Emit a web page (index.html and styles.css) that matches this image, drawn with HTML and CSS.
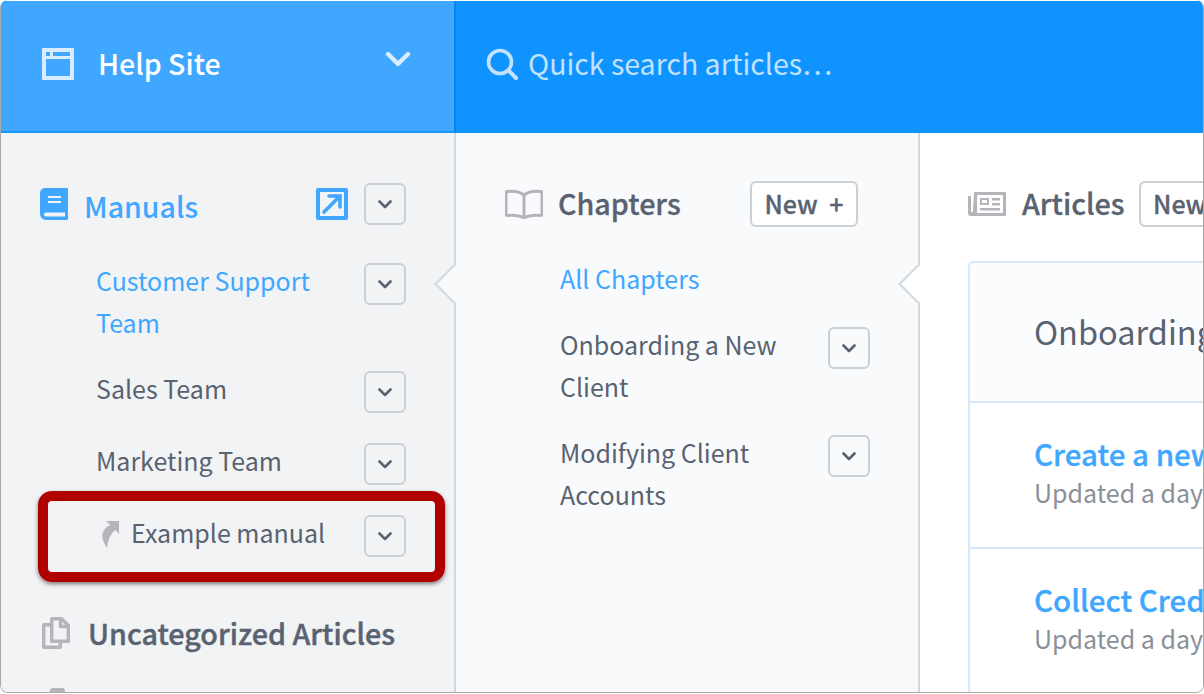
FILE: index.html
```html
<!DOCTYPE html>
<html lang="en">
<head>
    <meta charset="UTF-8">
    <title>Help Site</title>
    <link rel="stylesheet" href="styles.css">
</head>
<body>
    <div class="frame">
        <header class="topbar">
            <div class="site-switch">
                <svg class="site-icon" viewBox="0 0 32 32"><path fill="currentColor" fill-rule="evenodd" d="M1 0h30a1 1 0 0 1 1 1v30a1 1 0 0 1-1 1H1a1 1 0 0 1-1-1V1a1 1 0 0 1 1-1zm3 4v4h4V4zm7 0v4h17V4zM4 11v17h24V11z"/></svg>
                <span class="site-name">Help Site</span>
                <svg class="site-caret" viewBox="0 0 26 18"><path d="M3 3l10 10L23 3" fill="none" stroke="currentColor" stroke-width="4.4" stroke-linecap="round" stroke-linejoin="round"/></svg>
            </div>
            <div class="search">
                <svg class="search-icon" viewBox="0 0 32 32"><circle cx="14" cy="14" r="11.5" fill="none" stroke="currentColor" stroke-width="3.6"/><path d="M23 23l7 7" stroke="currentColor" stroke-width="4" stroke-linecap="round"/></svg>
                <span>Quick search articles…</span>
            </div>
        </header>

        <div class="columns">
            <aside class="col col-manuals">
                <div class="col-head">
                    <svg class="head-icon book" viewBox="0 0 28 32"><path fill="#3fa7ff" fill-rule="evenodd" d="M5 0h22a1 1 0 0 1 1 1v30l-1 1H6a6 6 0 0 1-6-6V5a5 5 0 0 1 5-5zm3 8v2h13V8zm0 5v2h13v-2zM6 24.500a2 2 0 0 0 0 4h19v-4z"/></svg>
                    <span class="manuals-title">Manuals</span>
                    <svg class="open-icon" viewBox="0 0 32 32"><path fill="#3fa7ff" fill-rule="evenodd" d="M2 0h28a2 2 0 0 1 2 2v28a2 2 0 0 1-2 2H2a2 2 0 0 1-2-2V2a2 2 0 0 1 2-2zm2 4v24h24V4z"/><path d="M8 24L23 9M13 8h11v11" fill="none" stroke="#3fa7ff" stroke-width="3.600" stroke-linecap="round"/></svg>
                    <button class="menu-btn"><svg viewBox="0 0 14 9"><path d="M1.500 1.500L7 7l5.500-5.500"/></svg></button>
                </div>
                <ul class="nav">
                    <li class="nav-row active"><a>Customer Support Team</a><button class="menu-btn"><svg viewBox="0 0 14 9"><path d="M1.500 1.500L7 7l5.500-5.500"/></svg></button></li>
                    <li class="nav-row"><a>Sales Team</a><button class="menu-btn"><svg viewBox="0 0 14 9"><path d="M1.500 1.500L7 7l5.500-5.500"/></svg></button></li>
                    <li class="nav-row"><a>Marketing Team</a><button class="menu-btn"><svg viewBox="0 0 14 9"><path d="M1.500 1.500L7 7l5.500-5.500"/></svg></button></li>
                    <li class="nav-row linked">
                        <svg class="link-icon" viewBox="0 0 17 28"><path fill="#b3b5b9" d="M4 0h13v13l-3.500-4C9 12 6 18 5 27 1 21-1 15 1.500 10 3 7 5.500 5 8.500 4z"/></svg>
                        <a>Example manual</a><button class="menu-btn"><svg viewBox="0 0 14 9"><path d="M1.500 1.500L7 7l5.500-5.500"/></svg></button>
                    </li>
                </ul>
                <div class="uncat">
                    <svg class="head-icon copy" viewBox="0 0 28 32"><path d="M10 1.700h9.500l6.800 6.800v15.800H9.700V2zM9.700 7.700H1.700v22.600h16.600v-6M18.500 2v7.500h7.500" fill="none" stroke="#b3b5b9" stroke-width="3.400" stroke-linejoin="round"/></svg>
                    <span>Uncategorized Articles</span>
                </div>
                <div class="peek"></div>
            </aside>

            <section class="col col-chapters">
                <span class="notch"></span>
                <div class="col-head">
                    <svg class="head-icon open-book" viewBox="0 0 38 30"><path d="M19 6C15 3 8 2 2.500 2.500 1.500 2.600 1 3.200 1 4v21c0 1 .6 1.500 1.500 1.500 6-.4 12 0 16.500 2.500 4.500-2.500 10.500-2.900 16.500-2.500 .9 0 1.500-.5 1.500-1.500V4c0-.8-.5-1.400-1.500-1.500C30 2 23 3 19 6zm0 0v23" fill="none" stroke="#b3b5b9" stroke-width="3"/></svg>
                    <h2>Chapters</h2>
                    <button class="new-btn">New <span class="plus">+</span></button>
                </div>
                <ul class="nav">
                    <li class="nav-row active"><a>All Chapters</a></li>
                    <li class="nav-row"><a>Onboarding a New Client</a><button class="menu-btn"><svg viewBox="0 0 14 9"><path d="M1.500 1.500L7 7l5.500-5.500"/></svg></button></li>
                    <li class="nav-row"><a>Modifying Client Accounts</a><button class="menu-btn"><svg viewBox="0 0 14 9"><path d="M1.500 1.500L7 7l5.500-5.500"/></svg></button></li>
                </ul>
            </section>

            <section class="col col-articles">
                <span class="notch"></span>
                <div class="col-head">
                    <svg class="head-icon news" viewBox="0 0 38 24"><path fill="#b3b5b9" fill-rule="evenodd" d="M6 0h31a1 1 0 0 1 1 1v22a1 1 0 0 1-1 1H3a3 3 0 0 1-3-3V4h3v16h2zm3 3v18h26V3zm3 3h9v7h-9zm2 2v3h5V8zm10-2h8v2.500h-8zm0 5h8v2.500h-8zm-12 5h20v2.500H12z"/></svg>
                    <h2>Articles</h2>
                    <button class="new-btn">New <span class="plus">+</span></button>
                </div>
                <div class="article-list">
                    <div class="list-title">Onboarding a New Client</div>
                    <div class="article">
                        <a>Create a new client</a>
                        <p>Updated a day ago</p>
                    </div>
                    <div class="article">
                        <a>Collect Credentials</a>
                        <p>Updated a day ago</p>
                    </div>
                </div>
            </section>
        </div>

        <div class="callout"></div>
    </div>
</body>
</html>
```

FILE: styles.css
```css
* {
    box-sizing: border-box;
}
html, body {
    margin: 0;
    height: 694px;
    overflow: hidden;
    background: #fff;
}
body {
    font-family: "Noto Sans CJK SC", "Noto Sans", sans-serif;
    color: #596270;
}
ul {
    list-style: none;
    margin: 0;
    padding: 0;
}
.frame {
    position: relative;
    width: 1204px;
    height: 693px;
    border: 1px solid #a9a9a9;
    border-top: 0;
    border-radius: 8px;
    overflow: hidden;
    padding-top: 1px;
}

/* top bar */
.topbar {
    display: flex;
    height: 132px;
    background: #0f94ff;
}
.site-switch {
    display: flex;
    align-items: flex-start;
    width: 455px;
    padding: 47px 43px 0 41px;
    background: #3fa7ff;
    border-right: 2px solid #0a84ea;
    border-bottom: 2px solid #1a94ff;
    color: #fff;
}
.site-icon {
    width: 32px;
    height: 32px;
    color: #d9ecff;
}
.site-name {
    margin: -5px 0 0 24px;
    font-size: 28.5px;
    line-height: 40px;
    font-weight: 500;
}
.site-caret {
    width: 26px;
    height: 18px;
    margin: 3px 0 0 auto;
    color: #d9ecff;
}
.search {
    display: flex;
    align-items: flex-start;
    padding: 47px 0 0 30px;
    color: #c3e2ff;
    font-size: 28.5px;
    line-height: 40px;
}
.search-icon {
    width: 32px;
    height: 32px;
    margin-right: 10px;
}
.search span {
    margin-top: -5px;
}

/* columns */
.columns {
    display: flex;
    height: 559px;
}
.col {
    position: relative;
    flex: none;
    padding-top: 50px;
}
.col-manuals {
    width: 455px;
    padding-left: 39px;
    padding-right: 48px;
    background: #f1f3f5;
    border-right: 2px solid #d0d8e0;
}
.col-chapters {
    width: 464px;
    padding-left: 49px;
    padding-right: 48px;
    background: #f8fafc;
    border-right: 2px solid #d0d8e0;
}
.col-articles {
    flex: 1;
    min-width: 0;
    padding-left: 48px;
    background: #fff;
    white-space: nowrap;
}
.notch {
    position: absolute;
    left: -16px;
    top: 137px;
    width: 28px;
    height: 28px;
    transform: rotate(45deg);
    background: inherit;
    border-left: 2px solid #d0d8e0;
    border-bottom: 2px solid #d0d8e0;
}
.col-head {
    position: relative;
    display: flex;
    align-items: center;
    height: 42px;
}
.head-icon {
    flex: none;
}
.book {
    width: 28px;
    height: 32px;
}
.manuals-title {
    margin: 2px 0 0 16px;
    flex: 1;
    font-size: 28.5px;
    font-weight: 500;
    color: #3fa7ff;
}
.open-icon {
    width: 32px;
    height: 32px;
    margin-right: 16px;
}
.col-head h2 {
    margin: -4px 0 0;
    font-size: 28.7px;
    font-weight: 500;
    color: #596270;
    -webkit-text-stroke: 0.3px #596270;
}
.open-book {
    width: 38px;
    height: 30px;
}
.col-chapters h2 {
    margin-left: 15px;
    flex: 1;
}
.col-chapters .new-btn {
    margin-right: 12px;
}
.news {
    width: 38px;
    height: 24px;
}
.col-articles h2 {
    margin-left: 16px;
}
.col-chapters .col-head,
.col-articles .col-head {
    margin-top: -2px;
    height: 46px;
}
.col-articles .new-btn {
    margin-left: 14px;
}

/* buttons */
.menu-btn {
    flex: none;
    display: flex;
    align-items: center;
    justify-content: center;
    width: 42px;
    height: 42px;
    padding: 0;
    background: transparent;
    border: 2px solid #cdd0d3;
    border-radius: 6px;
}
.menu-btn svg {
    width: 14px;
    height: 9px;
}
.menu-btn path {
    fill: none;
    stroke: #596270;
    stroke-width: 2.6;
    stroke-linecap: round;
    stroke-linejoin: round;
}
.new-btn {
    flex: none;
    width: 108px;
    height: 46px;
    padding: 0 0 2px;
    background: #fff;
    border: 2px solid #cdd0d3;
    border-radius: 6px;
    font-family: inherit;
    font-size: 25px;
    font-weight: 500;
    line-height: 38px;
    color: #596270;
    white-space: nowrap;
    -webkit-text-stroke: 0.3px #596270;
}
.plus {
    margin-left: 6px;
}

/* nav lists */
.nav {
    margin-top: 36px;
    padding-left: 56px;
}
.col-chapters .nav {
    margin-top: 32px;
    padding-left: 55px;
}
.nav-row {
    display: flex;
    justify-content: space-between;
    padding-bottom: 24px;
    font-size: 25px;
    line-height: 42px;
}
.nav-row a {
    width: 225px;
    margin: -2px 0 2px;
}
.nav-row .menu-btn {
    margin: 2px 0 4px;
}
.nav-row.active a {
    color: #3fa7ff;
    width: 240px;
}
.linked a {
    width: auto;
    flex: 1;
}
.link-icon {
    flex: none;
    width: 17px;
    height: 28px;
    margin: 8px 12px 0 6px;
}
.uncat {
    display: flex;
    align-items: center;
    margin-top: 27px;
    padding-left: 2px;
    font-size: 28.7px;
    line-height: 42px;
    font-weight: 500;
    white-space: nowrap;
    -webkit-text-stroke: 0.4px #596270;
}
.copy {
    width: 28px;
    height: 32px;
    margin-right: 18px;
}
.peek {
    width: 15px;
    height: 10px;
    margin: 34px 0 0 10px;
    background: #b3b5b9;
    border-radius: 3px;
}

/* articles */
.article-list {
    width: 600px;
    margin-top: 34px;
    border: 2px solid #d4e9fb;
    border-radius: 6px;
}
.list-title {
    height: 138px;
    padding: 44px 0 0 64px;
    background: #fbfcfe;
    border-radius: 6px 6px 0 0;
    font-size: 32.5px;
    line-height: 48px;
}
.article {
    height: 146px;
    padding: 30px 0 0 64px;
    border-top: 2px solid #d4e9fb;
}
.article a {
    display: block;
    font-size: 29.5px;
    line-height: 40px;
    font-weight: 500;
    color: #3fa7ff;
    -webkit-text-stroke: 0.3px #3fa7ff;
}
.article p {
    margin: 0;
    font-size: 25px;
    line-height: 38px;
    color: #8a9099;
}

/* red annotation box */
.callout {
    position: absolute;
    left: 37px;
    top: 491px;
    width: 407px;
    height: 91px;
    border: 10px solid #b00000;
    border-radius: 14px;
    box-shadow: 0 2px 4px rgba(0, 0, 0, 0.5);
}
```
